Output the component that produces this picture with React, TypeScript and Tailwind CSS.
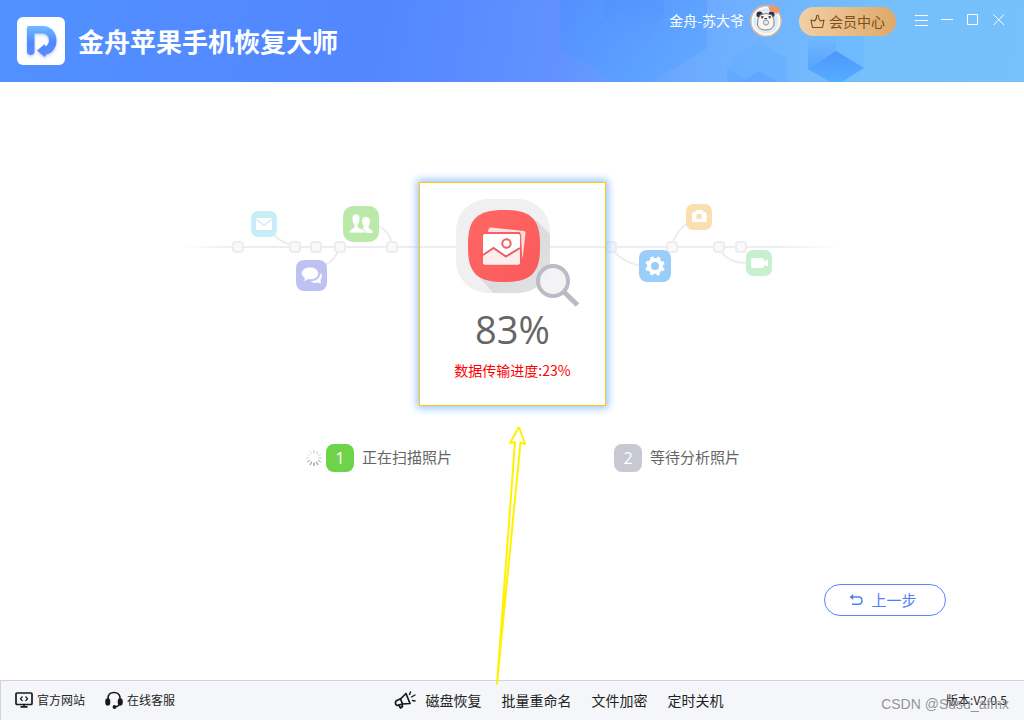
import React from "react";

function Logo() {
  return (
    <svg className="size-12 shrink-0" viewBox="0 0 48 48" aria-hidden="true">
      <defs>
        <linearGradient id="logo" x1="0" y1="0" x2="0" y2="1">
          <stop offset="0" stopColor="#6fbcfd" />
          <stop offset="0.55" stopColor="#5086ff" />
          <stop offset="1" stopColor="#5b8cf8" />
        </linearGradient>
        <filter id="logoShadow" x="-30%" y="-30%" width="160%" height="160%">
          <feDropShadow dx="0" dy="1.5" stdDeviation="1.5" floodColor="#5b7ff0" floodOpacity="0.4" />
        </filter>
      </defs>
      <rect width="48" height="48" rx="6" fill="#fff" />
      <path
        filter="url(#logoShadow)"
        fill="url(#logo)"
        d="M12 9H26C34 9 39.500 15.500 39.500 23.500C39.500 30.500 35.500 36 29.500 37.500L27.500 40L20 33.500L28 27V29.500C30.500 28.500 32 26.500 32 23.500C32 19.500 29.500 16.500 25.500 16.500H17.500V34.500C17.500 36.800 16 38 13.700 38C11.200 38 10 36.800 10 34.500V11C10 9.800 10.800 9 12 9Z"
      />
    </svg>
  );
}

function HeaderArt() {
  return (
    <svg className="pointer-events-none absolute top-0 right-0 h-full w-[500px]" viewBox="524 0 500 82" aria-hidden="true">
      <defs>
        <linearGradient id="hexBig" x1="0" y1="0" x2="1" y2="0.4">
          <stop offset="0" stopColor="#548fff" />
          <stop offset="1" stopColor="#5fa6ff" />
        </linearGradient>
        <linearGradient id="hexInner" x1="0" y1="0" x2="0" y2="1">
          <stop offset="0" stopColor="#4a88fb" stopOpacity="0.6" />
          <stop offset="1" stopColor="#58a0ff" stopOpacity="0" />
        </linearGradient>
        <linearGradient id="cube" x1="0" y1="0" x2="0" y2="1">
          <stop offset="0" stopColor="#4e96fb" />
          <stop offset="1" stopColor="#55aeff" />
        </linearGradient>
        <linearGradient id="cubeLeft" x1="0" y1="0" x2="0" y2="1">
          <stop offset="0" stopColor="#70b9ff" />
          <stop offset="1" stopColor="#5aa2ff" />
        </linearGradient>
      </defs>
      <path d="M560 0H707V48L652 82H614L560 48Z" fill="url(#hexBig)" />
      <path d="M604 0H664V17L634 0L604 20Z" fill="#4f8dff" opacity="0.3" />
      <path d="M634 0L664 18L634 58L584 30Z" fill="url(#hexInner)" opacity="0.5" />
      <path d="M731 59L759 43L787 58V82H731Z" fill="#61adff" opacity="0.5" />
      <path d="M727 68L747 82H727Z" fill="#5aa3ff" opacity="0.5" />
      <path d="M759 71L777 82H741Z" fill="#559fff" opacity="0.55" />
      <path d="M808 36H836V51L808 69Z" fill="url(#cubeLeft)" />
      <path d="M836 36H864V68L836 51Z" fill="#6fbaff" />
      <path d="M836 51L864 68L842 82H830L808 69Z" fill="url(#cube)" />
    </svg>
  );
}

function Avatar() {
  return (
    <svg className="h-[34px] w-8 shrink-0" viewBox="0 0 32 34" aria-hidden="true">
      <circle cx="16" cy="18" r="15" fill="#d9edfb" stroke="#f1b88e" strokeWidth="1.500" />
      <circle cx="16" cy="18" r="13.500" fill="none" stroke="#fff" strokeWidth="1.500" />
      <circle cx="9.500" cy="11.500" r="3" fill="#302b4a" />
      <circle cx="21.500" cy="11.500" r="3" fill="#302b4a" />
      <path d="M10 12Q16 9 22 12Q25 17 24 22Q22 27 16 27Q9 27 7.500 22Q7 16 10 12Z" fill="#fdf5e9" stroke="#6b6375" strokeWidth="0.800" />
      <path d="M11 13L14 13.500L12 16ZM21 13L18 13.500L20 16Z" fill="#302b4a" />
      <path d="M14.500 15.500H17" stroke="#302b4a" />
      <circle cx="16" cy="19.500" r="2.600" fill="#d4ecfb" stroke="#7f8997" strokeWidth="0.900" />
      <path d="M18 2.500L21 4L23 0L25.500 4L30 4.500L27.500 11L19.500 7.500Z" fill="#ea9a68" />
    </svg>
  );
}

const iconButton = "flex h-6 w-[26px] items-center justify-center text-white";

function Header() {
  return (
    <header className="relative flex h-[82px] shrink-0 items-start justify-between bg-[linear-gradient(100deg,#5191ff_0%,#5386ff_36%,#6192ff_55%,#6eaeff_70%,#75bffc_84%,#75c1fb_100%)] pr-3 pl-[17px]">
      <HeaderArt />
      <div className="relative flex items-center gap-[13px] pt-4">
        <Logo />
        <h1 className="text-[26px] leading-[50px] font-bold text-white">金舟苹果手机恢复大师</h1>
      </div>
      <div className="relative flex h-10 items-center">
        <span className="text-sm text-white">金舟-苏大爷</span>
        <span className="ml-[6px]">
          <Avatar />
        </span>
        <button className="ml-[17px] mt-[2px] flex h-[29px] w-[97px] items-center justify-center gap-1 rounded-full bg-linear-to-r from-[#f1cfa6] to-[#dfa968] text-sm text-[#7b4f16]">
          <svg className="size-[15px]" viewBox="0 0 15 15" fill="none" stroke="currentColor" strokeWidth="1.100" strokeLinejoin="round" aria-hidden="true">
            <path d="M2.500 13.500L1 6L4.500 7Q7 5 6.500 2Q7.500 0.500 8.500 2Q8.500 5 10.500 7L14 6L12.500 13.500Z" />
          </svg>
          会员中心
        </button>
        <div className="ml-3 flex">
          <button className={iconButton} aria-label="菜单">
            <svg className="h-3 w-[13px]" viewBox="0 0 13 12" stroke="currentColor" aria-hidden="true">
              <path d="M0 1.500H13M0 6.500H13M0 11.500H13" />
            </svg>
          </button>
          <button className={iconButton} aria-label="最小化">
            <svg className="h-3 w-3" viewBox="0 0 12 12" stroke="currentColor" aria-hidden="true">
              <path d="M0 5.500H12" />
            </svg>
          </button>
          <button className={iconButton} aria-label="最大化">
            <svg className="h-3 w-3" viewBox="0 0 12 12" fill="none" stroke="currentColor" aria-hidden="true">
              <path d="M.5 .5H10.500V10.500H.5Z" />
            </svg>
          </button>
          <button className={iconButton} aria-label="关闭">
            <svg className="h-3 w-3" viewBox="0 0 12 12" stroke="currentColor" aria-hidden="true">
              <path d="M.5 .5L11 11M11 .5L.5 11" />
            </svg>
          </button>
        </div>
      </div>
    </header>
  );
}

const nodes = [238, 295, 316, 340, 392, 611, 672, 719, 741];

function Timeline() {
  return (
    <svg className="col-start-1 row-start-1 mt-4 h-[94px] w-[660px]" viewBox="182 198 660 94" aria-hidden="true">
      <defs>
        <linearGradient id="fade" gradientUnits="userSpaceOnUse" x1="182" y1="0" x2="842" y2="0">
          <stop offset="0" stopColor="#ededf0" stopOpacity="0" />
          <stop offset="0.080" stopColor="#ededf0" />
          <stop offset="0.900" stopColor="#ededf0" />
          <stop offset="1" stopColor="#ededf0" stopOpacity="0" />
        </linearGradient>
      </defs>
      <rect x="182" y="246" width="660" height="2" fill="url(#fade)" />
      <g fill="none" stroke="#ededf0" strokeWidth="2">
        <path d="M274 235Q280 242 292 245" />
        <path d="M325 265Q334 261 339 249" />
        <path d="M379 226Q389 232 392 243" />
        <path d="M613 250Q622 262 641 266" />
        <path d="M672 244Q677 230 688 223" />
        <path d="M720 250Q727 263 748 263" />
      </g>
      {nodes.map((x) => (
        <rect key={x} x={x - 5} y="242" width="10" height="10" rx="3" fill="#f9f9fa" stroke="#ededf0" strokeWidth="2" />
      ))}
      <rect x="251" y="211" width="26" height="26" rx="7" fill="#c7eef6" />
      <path d="M256 218H272V230H256Z" fill="#fff" />
      <path d="M256 219.500L264 225L272 219.500" fill="none" stroke="#c7eef6" strokeWidth="1.500" />
      <rect x="343" y="206" width="36" height="36" rx="10" fill="#bae9aa" />
      <g fill="#fff">
        <path d="M362 233H373Q373 230.500 368.500 228V226Q370 224 370 221Q370 217 366 217Q362 217 362 221Q362 224 363.500 226V228Z" />
        <path d="M349 233Q349 229.500 354 227.500V225Q352 222.500 352 218.500Q352 214 356 214Q360 214 360 218.500Q360 222.500 358 225V227.500Q366 229.500 366 233Z" stroke="#bae9aa" strokeWidth="0.800" />
      </g>
      <rect x="296" y="260" width="31" height="31" rx="8" fill="#bec2f2" />
      <path d="M311 281Q318 282 321 273Q323 276 320.500 280L321 283.500L317 282.500Q313 284 311 281Z" fill="#fff" />
      <path d="M310 267C305 267 301.500 270 301.500 273.500Q301.500 276 304.500 278L303.500 282L308 279.500C314 280.500 318.500 277.500 318.500 273.500C318.500 270 315 267 310 267Z" fill="#fff" stroke="#bec2f2" strokeWidth="0.700" />
      <rect x="686" y="204" width="26" height="26" rx="7" fill="#fadfb1" />
      <path d="M693.500 212H695L696.500 210H702L703.500 212H705Q706.500 212 706.500 213.500V220.500Q706.500 222 705 222H693.500Q692 222 692 220.500V213.500Q692 212 693.500 212Z" fill="#fff" />
      <circle cx="699" cy="216.500" r="2.800" fill="#fadfb1" />
      <rect x="639" y="250" width="32" height="32" rx="8" fill="#9acdfa" />
      <circle cx="655" cy="266" r="6" fill="none" stroke="#fff" strokeWidth="4" />
      <circle cx="655" cy="266" r="8.500" fill="none" stroke="#fff" strokeWidth="2.500" strokeDasharray="3.337 3.337" strokeDashoffset="-1.700" />
      <rect x="746" y="250" width="26" height="26" rx="7" fill="#c7f0d1" />
      <rect x="751" y="258" width="13" height="10" rx="2" fill="#fff" />
      <path d="M763 262L768 259.500V266.500L763 264.500Z" fill="#fff" />
    </svg>
  );
}

function PhotoScanIcon() {
  return (
    <svg className="h-[110px] w-[129px]" viewBox="448 198 129 110" overflow="visible" aria-hidden="true">
      <defs>
        <linearGradient id="red" x1="0" y1="0" x2="1" y2="1">
          <stop offset="0" stopColor="#ff6764" />
          <stop offset="1" stopColor="#fa5a5b" />
        </linearGradient>
        <linearGradient id="longShadow" x1="0" y1="0" x2="1" y2="1">
          <stop offset="0.400" stopColor="#dcdcdc" />
          <stop offset="1" stopColor="#ebebeb" />
        </linearGradient>
        <clipPath id="outer">
          <rect x="456" y="199" width="94" height="94" rx="32" />
        </clipPath>
      </defs>
      <rect x="456" y="199" width="94" height="94" rx="32" fill="#f0f0f0" />
      <path d="M536 220L580 264L524 326L476 274Z" fill="url(#longShadow)" clipPath="url(#outer)" />
      <path d="M468 244C468 219 477 210 504 210C531 210 540 219 540 244V248C540 273 531 282 504 282C477 282 468 273 468 248Z" fill="url(#red)" />
      <path d="M491 227.500L524 231Q526 231.500 525.500 233.500L522.500 259L520 232H488L488.500 229.500Q489 227.300 491 227.500Z" fill="#ffe0e0" />
      <rect x="482.500" y="232.500" width="39" height="33" rx="3" fill="#ef5f62" opacity="0.700" />
      <path d="M485 234H518Q520 234 520 236V262.500Q520 264.500 518 264.500H485Q483 264.500 483 262.500V236Q483 234 485 234Z" fill="#fff" />
      <path d="M483 255L493.500 248L506 256.500L520 248V262.500Q520 264.500 518 264.500H485Q483 264.500 483 262.500Z" fill="#ffeded" />
      <path d="M483 255L493.500 248L506 256.500L520 248" fill="none" stroke="#ef5f62" strokeWidth="2" />
      <circle cx="506.500" cy="243.500" r="4.200" fill="#fff" stroke="#ef5f62" strokeWidth="2" />
      <path d="M564 292L577.500 305" stroke="#bbbbc5" strokeWidth="5" />
      <circle cx="553" cy="281" r="15" fill="#f2f2f5" fillOpacity="0.920" stroke="#bbbbc5" strokeWidth="4" />
    </svg>
  );
}

const spokes = [0.35, 0.3, 0.25, 0.3, 0.55, 0.75, 0.8, 0.7, 0.45, 0.2, 0.15, 0.2];

function Spinner() {
  return (
    <svg className="mr-1 size-4" viewBox="0 0 16 16" role="img" aria-label="扫描中">
      {spokes.map((opacity, i) => (
        <path key={i} d="M8 0V3.500" stroke="#777" strokeWidth="1.200" opacity={opacity} transform={`rotate(${i * 30} 8 8)`} />
      ))}
    </svg>
  );
}

function Step({ n, label, active }: { n: number; label: string; active?: boolean }) {
  return (
    <li className="flex items-center">
      {active && <Spinner />}
      <span className={`mr-2 flex size-7 items-center justify-center rounded-lg font-[Open_Sans] text-base text-white ${active ? "bg-[#6fd34a]" : "bg-[#c8c8d2]"}`}>
        {n}
      </span>
      <span className="pb-[2px] text-[15px] text-[#666]">{label}</span>
    </li>
  );
}

function PointerArrow() {
  return (
    <svg
      className="pointer-events-none absolute top-[345px] left-1/2 -ml-[22px] h-[260px] w-10"
      viewBox="490 427 40 260"
      fill="none"
      stroke="#fff200"
      strokeWidth="2"
      aria-hidden="true"
    >
      <path d="M497 684L515 442L510 443L519 427L525 444L520.500 442.500Z" strokeLinejoin="round" />
    </svg>
  );
}

function Footer() {
  return (
    <footer className="flex h-10 shrink-0 items-center justify-between border-t border-l border-[#d2d3d5] bg-[#f5f6f9] pr-[17px] pb-[2px] pl-[14px] text-xs text-[#222]">
      <div className="flex items-center gap-5">
        <a href="#website" className="flex items-center gap-1">
          <svg className="h-4 w-[18px]" viewBox="0 0 18 16" fill="none" stroke="#18191c" strokeWidth="1.700" aria-hidden="true">
            <rect x="1" y="1" width="16" height="11.500" rx="1" />
            <path d="M7.500 4.500L5.500 6.700L7.500 9M10.500 4.500L12.500 6.700L10.500 9" strokeWidth="1.200" />
            <path d="M9 12V14.500M5.500 14.800H12.500" />
          </svg>
          官方网站
        </a>
        <a href="#support" className="flex items-center gap-1">
          <svg className="h-[18px] w-[18px]" viewBox="0 0 18 18" fill="none" stroke="#18191c" strokeWidth="1.500" aria-hidden="true">
            <path d="M3 9V7.500Q3 1.500 9 1.500Q15 1.500 15 7.500V11Q15 15 10 16" />
            <rect x="1" y="8" width="3.500" height="6" rx="1.700" fill="#18191c" />
            <rect x="13.500" y="8" width="3.500" height="6" rx="1.700" fill="#18191c" />
            <circle cx="9.500" cy="16" r="1.200" fill="#18191c" />
          </svg>
          在线客服
        </a>
      </div>
      <nav className="mr-1 flex items-center gap-5 text-sm">
        <a href="#disk" className="flex items-center gap-[10px]">
          <svg className="h-[18px] w-[22px]" viewBox="0 0 22 18" fill="none" stroke="#18191c" strokeWidth="1.700" strokeLinejoin="round" strokeLinecap="round" aria-hidden="true">
            <path d="M2 10L7 7.500L12 2.500L16 12.500L8.500 13L3 14.500Q0.500 13 2 10Z" />
            <path d="M6.500 8L8.500 13M5 14.500L6.500 17L8.500 15.500L8 13.500" />
            <path d="M15.500 3.500L16.500 1M17.500 6L21 4M18.500 9.500L21 10" strokeWidth="1.400" />
          </svg>
          磁盘恢复
        </a>
        <a href="#rename">批量重命名</a>
        <a href="#encrypt">文件加密</a>
        <a href="#shutdown">定时关机</a>
      </nav>
      <div className="relative">
        版本:V2.0.5
        <span className="pointer-events-none absolute top-[2px] -right-[2px] font-[Liberation_Sans] text-sm leading-5 whitespace-nowrap text-[#888]/90">
          CSDN @Susu_afmx
        </span>
      </div>
    </footer>
  );
}

export default function App() {
  return (
    <div className="flex min-h-screen flex-col bg-white font-['Noto_Sans_CJK_SC',sans-serif]">
      <Header />
      <main className="relative flex flex-1 flex-col pt-[100px]">
        <div className="grid items-start justify-center justify-items-center">
          <Timeline />
          <section className="relative col-start-1 row-start-1 ml-px flex h-56 w-[187px] flex-col items-center border border-[#ffc80a] pt-[15px] shadow-[0_0_8px_2px_#8fc0fb]">
            <PhotoScanIcon />
            <p className="font-[Open_Sans] text-[38px] leading-[42px] text-[#666]">83%</p>
            <p className="mt-2 text-sm leading-6 text-[#f00]">数据传输进度:23%</p>
          </section>
        </div>
        <ol className="mt-[38px] flex justify-center gap-[162px] pl-[22px]">
          <Step n={1} label="正在扫描照片" active />
          <Step n={2} label="等待分析照片" />
        </ol>
        <button className="mt-auto mr-[78px] mb-16 flex h-8 w-[122px] items-center justify-center gap-2 self-end rounded-full border border-[#5587ff] pr-1 text-[15px] text-[#4d80f5]">
          <svg className="h-3 w-[14px]" viewBox="0 0 14 12" fill="none" stroke="currentColor" strokeWidth="1.500" aria-hidden="true">
            <path d="M1.500 3H9.500Q13 3 13 6.500Q13 10.200 9.500 10.200H3" />
            <path d="M4 0.500L1 3L4 5.500Z" fill="currentColor" strokeWidth="0.500" />
          </svg>
          上一步
        </button>
        <PointerArrow />
      </main>
      <Footer />
    </div>
  );
}
